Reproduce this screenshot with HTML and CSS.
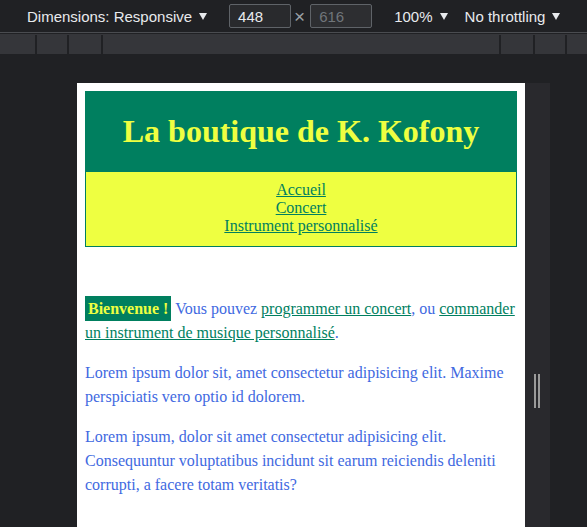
FILE: index.html
```html
<!DOCTYPE html>
<html lang="fr">
<head>
<meta charset="utf-8">
<title>La boutique de K. Kofony</title>
<link rel="stylesheet" href="styles.css">
</head>
<body>
<div class="toolbar">
  <span class="tb-label tb-dim">Dimensions: Responsive</span>
  <svg class="caret" width="8" height="7" viewBox="0 0 8 7"><polygon points="0,0 8,0 4,7" fill="#e8eaed"/></svg>
  <span class="tb-input tb-w">448</span>
  <span class="tb-times">×</span>
  <span class="tb-input tb-h">616</span>
  <span class="tb-label tb-zoom">100%</span>
  <svg class="caret" width="8" height="7" viewBox="0 0 8 7"><polygon points="0,0 8,0 4,7" fill="#e8eaed"/></svg>
  <span class="tb-label tb-throttle">No throttling</span>
  <svg class="caret" width="8" height="7" viewBox="0 0 8 7"><polygon points="0,0 8,0 4,7" fill="#e8eaed"/></svg>
</div>
<div class="separator"></div>
<div class="ruler">
  <div class="ruler-top"></div>
  <div class="ruler-segments">
    <div></div><div></div><div></div><div></div><div></div><div></div><div></div>
  </div>
</div>
<div class="stage">
  <div class="page">
    <header class="site-header">
      <div class="banner">
        <h1>La boutique de K. Kofony</h1>
      </div>
      <nav class="site-nav">
        <ul>
          <li><a href="#">Accueil</a></li>
          <li><a href="#">Concert</a></li>
          <li><a href="#">Instrument personnalisé</a></li>
        </ul>
      </nav>
    </header>
    <main class="content">
      <p><strong class="welcome">Bienvenue !</strong> Vous pouvez <a href="#">programmer un concert</a>, ou <a href="#">commander un instrument de musique personnalisé</a>.</p>
      <p>Lorem ipsum dolor sit, amet consectetur adipisicing elit. Maxime perspiciatis vero optio id dolorem.</p>
      <p>Lorem ipsum, dolor sit amet consectetur adipisicing elit. Consequuntur voluptatibus incidunt sit earum reiciendis deleniti corrupti, a facere totam veritatis?</p>
    </main>
  </div>
  <div class="handle-track">
    <div class="handle"></div>
  </div>
</div>
</body>
</html>
```
FILE: styles.css
```css
html, body {
  margin: 0;
  padding: 0;
}
body {
  width: 587px;
  height: 527px;
  overflow: hidden;
  background: #202124;
  font-family: "Liberation Sans", Arial, sans-serif;
}
.toolbar {
  height: 32px;
  display: flex;
  align-items: center;
  background: #202124;
  color: #e8eaed;
  font-size: 15px;
  line-height: 17px;
}
.tb-dim { margin-left: 27px; }
.caret { flex: none; margin-left: 7px; margin-top: 1px; }
.tb-input {
  box-sizing: border-box;
  width: 62px;
  height: 24px;
  border: 1px solid #5f6368;
  border-radius: 2px;
  background: #292a2d;
  padding: 3px 8px;
  line-height: 17px;
}
.tb-w { margin-left: 22px; color: #e8eaed; }
.tb-h { margin-left: 5px; color: #70757a; background: #2d2e31; }
.tb-times { margin-left: 3px; color: #9aa0a6; font-size: 19px; line-height: 17px; }
.tb-zoom { margin-left: 22px; }
.tb-throttle { margin-left: 17px; }

.separator {
  height: 1px;
  background: #4a4c50;
  margin-bottom: 1px;
}
.ruler { height: 20px; }
.ruler-top { height: 1px; background: #35363a; }
.ruler-segments {
  height: 19px;
  display: grid;
  grid-template-columns: 35px 30px 32px 396px 32px 30px 20px;
  column-gap: 2px;
  background: #202124;
}
.ruler-segments div { background: #35363a; }

.stage {
  display: flex;
  padding-top: 29px;
  padding-left: 77px;
}
.page {
  box-sizing: border-box;
  width: 448px;
  height: 616px;
  flex: none;
  background: #ffffff;
  padding: 8px;
  font-family: "Liberation Serif", "Times New Roman", serif;
  font-size: 16px;
}
.handle-track {
  box-sizing: border-box;
  width: 25px;
  height: 616px;
  flex: none;
  background: #29292d;
  display: flex;
  align-items: center;
  padding-left: 9px;
}
.handle {
  width: 2px;
  height: 34px;
  border-left: 2px solid #9a9a9a;
  border-right: 2px solid #9a9a9a;
}

.banner {
  background: #007f5f;
  padding: 22px 0;
}
.banner h1 {
  margin: 0;
  font-size: 32px;
  line-height: 37px;
  font-weight: bold;
  text-align: center;
  color: #eeff41;
}
.site-nav {
  background: #eeff41;
  border: 1px solid #007f5f;
  border-top: none;
  padding: 9px 0 11px;
  text-align: center;
}
.site-nav ul {
  list-style: none;
  margin: 0;
  padding: 0;
}
.site-nav a { color: #007f5f; }

.content { padding-top: 34px; }
.content p {
  margin: 16px 0;
  line-height: 24px;
  color: #4169e1;
}
.content a { color: #007f5f; }
.welcome {
  background: #007f5f;
  color: #eeff41;
  padding: 4px 3px;
}
```
